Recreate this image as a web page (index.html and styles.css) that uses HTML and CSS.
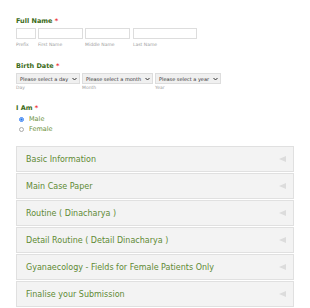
FILE: index.html
```html
<!DOCTYPE html>
<html lang="en">
<head>
  <meta charset="UTF-8">
  <title>Patient Form</title>
  <link rel="stylesheet" href="styles.css">
</head>
<body>
  <div class="form">
    <div class="field">
      <div class="field-label">Full Name <span class="req">*</span></div>
      <div class="name-row">
        <div class="sub prefix"><input type="text"><span>Prefix</span></div>
        <div class="sub first"><input type="text"><span>First Name</span></div>
        <div class="sub middle"><input type="text"><span>Middle Name</span></div>
        <div class="sub last"><input type="text"><span>Last Name</span></div>
      </div>
    </div>

    <div class="field birth">
      <div class="field-label">Birth Date <span class="req">*</span></div>
      <div class="date-row">
        <div class="sub day">
          <div class="select">Please select a day <svg width="5" height="4" viewBox="0 0 5 4"><path d="M0.5 1 L2.5 3 L4.5 1" fill="none" stroke="#333" stroke-width="1"/></svg></div>
          <span>Day</span>
        </div>
        <div class="sub month">
          <div class="select">Please select a month <svg width="5" height="4" viewBox="0 0 5 4"><path d="M0.5 1 L2.5 3 L4.5 1" fill="none" stroke="#333" stroke-width="1"/></svg></div>
          <span>Month</span>
        </div>
        <div class="sub year">
          <div class="select">Please select a year <svg width="5" height="4" viewBox="0 0 5 4"><path d="M0.5 1 L2.5 3 L4.5 1" fill="none" stroke="#333" stroke-width="1"/></svg></div>
          <span>Year</span>
        </div>
      </div>
    </div>

    <div class="field gender">
      <div class="field-label">I Am <span class="req">*</span></div>
      <label class="radio"><span class="dot checked"></span>Male</label>
      <label class="radio"><span class="dot"></span>Female</label>
    </div>

    <div class="accordion">
      <div class="section"><span>Basic Information</span><i class="arrow"></i></div>
      <div class="section"><span>Main Case Paper</span><i class="arrow"></i></div>
      <div class="section"><span>Routine ( Dinacharya )</span><i class="arrow"></i></div>
      <div class="section"><span>Detail Routine ( Detail Dinacharya )</span><i class="arrow"></i></div>
      <div class="section"><span>Gyanaecology - Fields for Female Patients Only</span><i class="arrow"></i></div>
      <div class="section"><span>Finalise your Submission</span><i class="arrow"></i></div>
    </div>
  </div>
</body>
</html>
```

FILE: styles.css
```css
body {
  margin: 0;
  background: #fff;
  font-family: "DejaVu Sans", Verdana, sans-serif;
}
.form {
  padding: 17px 16px 0;
  width: 278px;
}
.field-label {
  font-size: 6.5px;
  font-weight: bold;
  color: #3b6b18;
  line-height: 8px;
}
.req {
  color: #e33;
}
.name-row, .date-row {
  display: flex;
  gap: 2px;
  margin-top: 3px;
}
.sub {
  display: flex;
  flex-direction: column;
}
.sub span {
  font-size: 4.5px;
  color: #a0a0a0;
  line-height: 6px;
  margin-top: 3px;
}
.sub input {
  box-sizing: border-box;
  height: 11px;
  border: 1px solid #ddd;
  padding: 0;
  margin: 0;
  width: 100%;
}
.prefix { width: 20px; }
.first { width: 45px; }
.middle { width: 45px; }
.last { width: 64px; margin-left: 1px; }
.birth {
  margin-top: 14px;
}
.select {
  box-sizing: border-box;
  height: 11px;
  border: 1px solid #ddd;
  background: #f0f0f0;
  font-size: 5px;
  color: #333;
  display: flex;
  align-items: center;
  justify-content: space-between;
  padding: 0 2px 0 3px;
  white-space: nowrap;
}
.day { width: 64px; }
.month { width: 71px; }
.year { width: 66px; }
.date-row .sub span {
  margin-top: 1px;
}
.gender {
  margin-top: 13px;
}
.radio {
  display: flex;
  align-items: center;
  font-size: 6.5px;
  color: #6a8f3a;
  line-height: 10px;
  padding-left: 3px;
}
.gender .field-label {
  margin-bottom: 2px;
}
.dot {
  box-sizing: border-box;
  width: 5px;
  height: 5px;
  border: 1px solid #aaa;
  border-radius: 50%;
  margin-right: 5px;
  background: #fff;
}
.dot.checked {
  border-color: #3b82f6;
  background: radial-gradient(circle, #1a73e8 45%, #cfe0fb 50%);
}
.accordion {
  margin-top: 12px;
  display: flex;
  flex-direction: column;
  gap: 1px;
}
.section {
  box-sizing: border-box;
  height: 26px;
  background: #f3f3f3;
  border: 1px solid #e0e0e0;
  display: flex;
  align-items: center;
  justify-content: space-between;
  padding: 0 7px 0 9px;
  font-size: 8px;
  color: #5e8a34;
}
.arrow {
  width: 0;
  height: 0;
  border-top: 3px solid transparent;
  border-bottom: 3px solid transparent;
  border-right: 7px solid #dcdcdc;
}
```
